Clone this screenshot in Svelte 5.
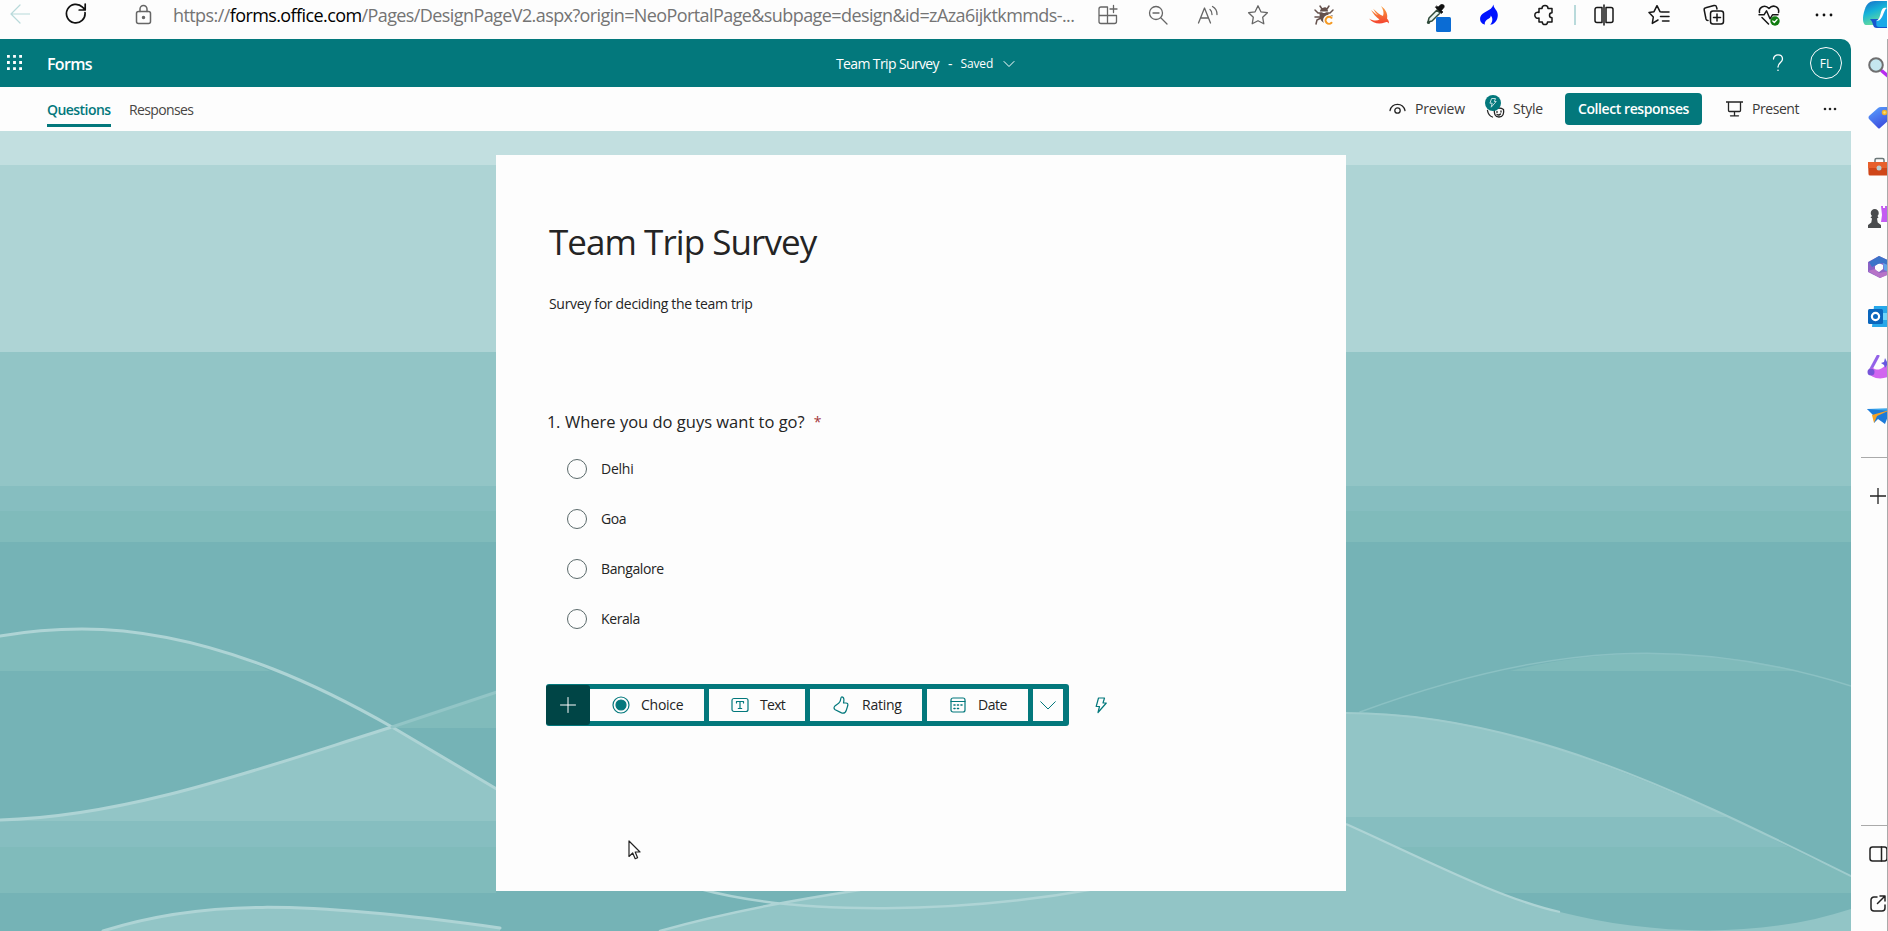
<script>
  const options = ['Delhi', 'Goa', 'Bangalore', 'Kerala'];
</script>

<div class="app">
  <header class="browser">
    <div class="nav">
      <svg class="back" width="20" height="20" viewBox="0 0 20 20"><path d="M19.5 10H1M10 1 1 10l9 9" /></svg>
      <svg class="reload" width="22" height="22" viewBox="0 0 22 22"><path d="M20 9.5a9.3 9.3 0 1 1-2.5-5.3L20 6.600M20.200 1v6h-6" /></svg>
      <svg class="lock" width="18" height="22" viewBox="0 0 18 22"><rect x="1.500" y="7.500" width="14" height="12" rx="2" /><path d="M5 7.500V5a3.500 3.500 0 0 1 7 0v2.500" /><circle cx="8.500" cy="13.500" r="1" fill="#666" /></svg>
    </div>
    <div class="url">https://<b>forms.office.com</b>/Pages/DesignPageV2.aspx?origin=NeoPortalPage&amp;subpage=design&amp;id=zAza6ijktkmmds-...</div>
    <div class="tools grey">
      <svg viewBox="0 0 22 22"><path d="M2 11.500V5a2 2 0 0 1 2-2h6.500v16.500M2 11.500V17.500a2 2 0 0 0 2 2h13.500a2 2 0 0 0 2-2v-6H2M16.500 1.500v7M13 5h7" /></svg>
      <svg viewBox="0 0 22 22"><circle cx="9" cy="9" r="6.500" /><path d="m14 14 6 6M6 9h6" /></svg>
      <svg viewBox="0 0 22 22"><path d="M1.500 19 7.500 4l6 15M3.500 14h8M13 5.500a6 6 0 0 1 2 5M15.500 2.500a9 9 0 0 1 4.500 8" /></svg>
      <svg viewBox="0 0 22 22"><path d="m11 1.800 2.900 6 6.500.9-4.700 4.600 1.100 6.500L11 16.700l-5.800 3.100 1.100-6.500L1.600 8.700l6.500-.9z" /></svg>
    </div>
    <div class="tools ext">
      <svg viewBox="0 0 22 22"><g stroke="#65524d" stroke-width="1.500"><path d="m7 2 2 3 3-1 2 1 2-3M2 6l3 3h4M20 6l-3 3h-4M2 13h5M3 20l1-4 4-2M19 12h-4" /></g><path d="M7 7.500a4 3.500 0 0 1 8 0zM6.500 9h9v4l-3 2-1 4c-3-1-5-4-5-10z" fill="#65524d" stroke="none" /><path d="M18 13.800a3.500 3.500 0 1 0 0 5" stroke="#fdfdfd" stroke-width="4" /><path d="M18.500 13.800a3.500 3.500 0 1 0 0 5" stroke="#f59a23" stroke-width="2" /></svg>
      <svg viewBox="0 0 22 22"><defs><linearGradient id="sw" x2="0" y2="1"><stop stop-color="#f9a03d" /><stop offset="1" stop-color="#f4432f" /></linearGradient></defs><path d="M13 2c5 3.500 7 8.500 6 12.500 2 2 2.200 4 1.700 5-1.200-1.800-2.600-1.700-4-1C11 21 4.500 19 1 14.500c4 2.500 8 2.600 10.500 1C8 13 5 9.500 3 6c2.500 2.200 4.800 4 7 5.300C8 9.200 6.500 7 5.200 4.700 8 7.500 11.500 10.500 15 12c1.300-3.300.2-6.500-2-10z" fill="url(#sw)" stroke="none" /></svg>
      <svg class="dropper" viewBox="0 0 26 30"><path d="m3 18 1-4 8-8 3 3-8 8z" fill="#eaf4ee" stroke="#304b3b" stroke-width="1.500" /><path d="m10.500 3.500 6 6 1.500-1.500-1.500-1.500 2.500-3c1-2-1-4-3-3l-3 2.500-1.200-1z" fill="#111" stroke="#111" stroke-width=".6" /><circle cx="3.500" cy="18.500" r="1.600" fill="#304b3b" stroke="none" /><rect x="11" y="13" width="15" height="15" rx="1.500" fill="#0b6cd4" stroke="none" /></svg>
      <svg viewBox="0 0 22 22"><path d="M15.500.5c0 4 4.200 5.500 4.300 10.500 0 5-3 8.500-5.800 9.500H6.500C3 19.500 1.500 16.500 2.300 13 3.800 7.500 13.500 7.500 15.500.5z" fill="#0012ff" stroke="none" /><path d="M7 21c-1-3 1.500-5.500 4-6.500 1.500-.8 1.800-2 1.700-3 2.300 2.500 2.300 6.500-.7 9.500z" fill="#fdfdfd" stroke="none" /></svg>
      <svg viewBox="0 0 22 22"><path d="M6 4.500h3a3 3 0 0 1 6 0h4v4.300a2.300 2.300 0 0 0 0 5V18h-4.500a2.600 2.600 0 0 1-5.200 0H6v-4a3 3 0 1 1 0-5.500z" /></svg>
    </div>
    <i class="divider"></i>
    <div class="tools">
      <svg viewBox="0 0 22 22"><path d="M9 3.500H4A2 2 0 0 0 2 5.500v11a2 2 0 0 0 2 2h5zM13 3.500h5a2 2 0 0 1 2 2v11a2 2 0 0 1-2 2h-5zM11 1v20" /></svg>
      <svg viewBox="0 0 22 22"><path d="m14 8-2-.3-3-6-3 6-5 .9 4.300 4.500-1 6.300L10 16M14.500 8H21M12.500 12.500H21M14.500 17H21" /></svg>
      <svg viewBox="0 0 22 22"><path d="M5 16.500a2 2 0 0 1-2-1.500L1.200 6a2 2 0 0 1 1.500-2.300L11 1.500A2 2 0 0 1 13.500 3l.5 2" /><rect x="7.500" y="7" width="13" height="13" rx="2.500" /><path d="M14 10v7M10.500 13.500h7" /></svg>
      <svg viewBox="0 0 22 22"><path d="M1.500 8.500C.5 3 7 0 11 4.500 15-.2 21.800 3 20.500 8.500M1 10.800h5l2.500-4 3.500 8 2.500-4H20M4 13.500l6.500 6.500" /><circle cx="17" cy="17" r="4.700" fill="#107c10" stroke="none" /><path d="m14.800 17 1.500 1.500 2.800-3" stroke="#fff" stroke-width="1.200" /></svg>
      <svg viewBox="0 0 22 22"><g fill="#111" stroke="none"><circle cx="4" cy="11" r="1.400" /><circle cx="11" cy="11" r="1.400" /><circle cx="18" cy="11" r="1.400" /></g></svg>
    </div>
    <svg class="copilot" width="24" height="29" viewBox="0 0 24 29"><defs><linearGradient id="c1" x2=".4" y2="1"><stop stop-color="#1769c8" /><stop offset=".5" stop-color="#16b3d8" /><stop offset="1" stop-color="#67dc9c" /></linearGradient></defs><path d="M12 1h12v12l-6 12H3C0 25-1 19 1 12 3 5 5 1 12 1z" fill="url(#c1)" /><path d="M7 19h12l5-10v19H14c-5 0-3-5-7-9z" fill="#1656cd" /><path d="M18 12c1-4 3-5 6-4v19h-8c-4 0-2-4-3-6 3-1 4-5 5-9z" fill="#1aa9e8" /><path d="M24 8c-3-1-5 0-6 4s-2 8-5 9c3 0 4-1 6-4s2-7 5-9z" fill="#fff" /></svg>
  </header>

  <div class="below">
    <main>
      <header class="suite">
        <svg class="waffle" width="15" height="15" viewBox="0 0 16 16"><path d="M0 0h3v3H0zM6.500 0h3v3h-3zM13 0h3v3h-3zM0 6.500h3v3H0zM6.500 6.500h3v3h-3zM13 6.500h3v3h-3zM0 13h3v3H0zM6.500 13h3v3h-3zM13 13h3v3h-3z" /></svg>
        <strong>Forms</strong>
        <div class="doc"><span class="name">Team Trip Survey</span><span class="dash">-</span><span class="saved">Saved</span><svg width="12" height="8" viewBox="0 0 12 8"><path d="m1 1.500 5 5 5-5" /></svg></div>
        <svg class="help" width="12" height="18" viewBox="0 0 12 18"><path d="M1.500 5C1.500-.5 10.500-.5 10.500 5c0 3.500-4.500 3.500-4.500 8" /><circle cx="6" cy="16.300" r=".8" fill="#fff" stroke="none" /></svg>
        <div class="avatar">FL</div>
      </header>

      <nav class="commands">
        <div class="tab active">Questions</div>
        <div class="tab">Responses</div>
        <div class="cmd preview"><svg width="17" height="12" viewBox="0 0 17 12"><path d="M1 7.500C3-.8 14-.8 16 7.500" /><circle cx="8.500" cy="7.500" r="2.700" /></svg><span>Preview</span></div>
        <div class="cmd style"><svg width="20" height="24" viewBox="0 0 20 24"><path d="M2.500 15.500c.5 3 2 5.500 5 6.500" /><path d="M9.500 14.500c2-2 6.500-2 9 0 .8 4-.5 7.500-4.500 7.500s-5.300-3.500-4.500-7.500z" /><path d="M12 16.500v1M16 16v1M12 19.500c1 .7 2.500.5 3.500-.5" /><circle cx="8" cy="8" r="8" fill="#03787c" stroke="none" /><path d="M7 3.500h3.500l-1.200 3h1.900l-5 5.700 1-4H5.300z" stroke="#c2dfe0" stroke-width="1" /></svg><span>Style</span></div>
        <div class="collect">Collect responses</div>
        <div class="cmd present"><svg width="17" height="16" viewBox="0 0 17 16"><path d="M0 1h17M2.500 1v8.500a1 1 0 0 0 1 1h10a1 1 0 0 0 1-1V1M8.500 10.500v4M4.500 14.800h8" /></svg><span>Present</span></div>
        <svg class="more" width="14" height="4" viewBox="0 0 14 4"><circle cx="2" cy="2" r="1.300" /><circle cx="7" cy="2" r="1.300" /><circle cx="12" cy="2" r="1.300" /></svg>
      </nav>

      <div class="canvas">
        <svg class="waves" width="1851" height="800" viewBox="0 131 1851 800">
          <path d="M0 131h1851v34H0z" fill="#c2dfe0" /><path d="M0 165h1851v187H0z" fill="#aed4d5" /><path d="M0 352h1851v134H0z" fill="#92c5c6" /><path d="M0 486h1851v25H0z" fill="#86bec0" /><path d="M0 511h1851v31H0z" fill="#80bbbb" /><path d="M0 542h1851v389H0z" fill="#75b3b6" />
          <path d="M0 635Q40 629 82 629C150 629 215 645 270 671H0z" fill="#80bbbb" />
          <path d="M392 728 500 692H760V728z" fill="#80bbbb" />
          <path d="M0 820C130 817 270 765 392 727L500 792 700 890H0z" fill="#92c5c6" />
          <path d="M0 821h496v26H0z" fill="#86bec0" /><path d="M0 847h496v46H0z" fill="#80bbbb" /><path d="M0 893h800v38H0z" fill="#75b3b6" />
          <path d="M103 931C200 900 300 900 500 928v3z" fill="#92c5c6" />
          <path d="M1510 671C1600 648 1700 648 1800 671z" fill="#80bbbb" />
          <path d="M1200 713H1365C1500 716 1620 770 1730 817H1200z" fill="#92c5c6" />
          <path d="M1200 817H1730L1789 847H1200z" fill="#86bec0" /><path d="M1200 847H1789L1851 877V893H1200z" fill="#80bbbb" />
          <path d="M660 931Q740 908 860 890H1346V824C1420 857 1500 899 1560 912 1650 935 1760 939 1851 909V931z" fill="#92c5c6" />
          <g fill="none" stroke="#aed4d5" stroke-width="3"><path d="M0 636Q40 629 82 629C220 629 350 703 392 727L500 791" /><path d="M0 820C130 817 270 765 392 727" /><path d="M103 931C200 900 300 900 500 928" /></g>
          <path d="M700 889C800 916 960 913 1095 889M660 931Q740 908 860 890" fill="none" stroke="#aed4d5" stroke-width="2.500" />
          <path d="m392 727 108-36" fill="none" stroke="#92c5c6" stroke-width="3" />
          <path d="M1360 712C1550 642 1690 636 1851 686" fill="none" stroke="#8bc1c3" stroke-width="1.500" />
          <path d="M1346 713C1530 713 1700 802 1851 876" fill="none" stroke="#9fcccd" stroke-width="2" />
          <path d="M1346 824C1420 857 1500 899 1560 912" fill="none" stroke="#aed4d5" stroke-width="2.200" stroke-linecap="butt" />
        </svg>
        <section class="card">
          <h1>Team Trip Survey</h1>
          <p class="sub">Survey for deciding the team trip</p>
          <div class="question"><span class="num">1.</span><span>Where you do guys want to go?</span><span class="req">*</span></div>
          <ul>{#each options as option}<li><i></i><span>{option}</span></li>{/each}</ul>
          <div class="adder">
            <div class="bar">
              <div class="plus"><svg width="16" height="16" viewBox="0 0 16 16"><path d="M8 .5v15M.5 8h15" /></svg></div>
              <div class="cell c1"><svg width="18" height="18" viewBox="0 0 18 18"><circle cx="9" cy="9" r="8" /><circle cx="9" cy="9" r="5" fill="#03787c" /></svg><span>Choice</span></div>
              <div class="cell c2"><svg width="18" height="16" viewBox="0 0 18 16"><rect x="1" y="1.500" width="16" height="13" rx="2" /><path d="M5.500 6V4.500h7V6M9 4.500v7M7.300 11.500h3.400" /></svg><span>Text</span></div>
              <div class="cell c3"><svg width="16" height="18" viewBox="0 0 16 18"><path d="M8.800.8C7.500.8 8 3.500 7 5.500 5.800 8 2.500 9 1.500 10.500c-.8 1.200-.4 2.400.7 3.200l6.300 3.200c2.500.8 4-.2 4.800-2.700l1.500-4.700c.3-1.500-.4-2.500-1.700-2.500h-2.600C11 5 11.500.8 8.800.8z" /></svg><span>Rating</span></div>
              <div class="cell c4"><svg width="16" height="16" viewBox="0 0 16 16"><rect x="1" y="1" width="14" height="14" rx="2" /><path d="M1 4.500h14" /><path d="M4 8h1M7.500 8h1M11 8h1M4 11.500h1M7.500 11.500h1" stroke-width="1.600" /></svg><span>Date</span></div>
              <div class="cell c5"><svg width="16" height="9" viewBox="0 0 16 9"><path d="m.7.700 7.300 7.300L15.300.7" /></svg></div>
            </div>
            <svg class="bolt" width="12" height="17" viewBox="0 0 12 17"><path d="M3.500 1h6L8 6h3.300L3 15.500 4.500 9.500H1.200z" /></svg>
          </div>
        </section>
        <svg class="cursor" width="14" height="20" viewBox="0 0 14 20"><path d="M1 1v15.500l3.700-3.500 2.500 5.700 2.400-1L7.200 12H12z" fill="#fff" stroke="#222" stroke-width="1.200" /></svg>
      </div>
    </main>

    <aside>
      <div class="slots">
        <svg viewBox="0 0 24 24"><path d="m16 16 7 6" stroke="#b82cf0" stroke-width="3.500" /><circle cx="10" cy="10" r="6.800" fill="#c5e7ef" stroke="#6f6f70" stroke-width="2" /></svg>
        <svg viewBox="0 0 24 24"><defs><linearGradient id="tg" x2=".5" y2="1"><stop stop-color="#5aa4ff" /><stop offset="1" stop-color="#3d50df" /></linearGradient></defs><path d="m3 11 9-8q1-1 3-1h9v12l-10 9q-1 1-2 0l-9-9q-1-1.500 0-3z" fill="url(#tg)" /><circle cx="18.500" cy="7.500" r="2" fill="#f8e27a" stroke="#f0b32a" stroke-width="1.500" /></svg>
        <svg viewBox="0 0 24 24"><path d="M9 7V5q0-1.500 1.500-1.500h6Q18 3.500 18 5v2" fill="none" stroke="#6b7778" stroke-width="1.500" /><path d="M2 7h22v13.500H4q-1.500 0-1.500-1.500z" fill="#cf4619" /><path d="M2 7h22v6H2z" fill="#e8602c" /><circle cx="13" cy="13" r="2.500" fill="#b9cdd0" /></svg>
        <svg viewBox="0 0 24 24"><path d="M15 1h2v2h2V1h3v2h2v14h-9l1-7z" fill="#c45cf2" /><path d="M6 11a4 4 0 1 1 5.500 0l1 1.500-1.500 1 .7 4 3.300 2.500v3H2v-3l3.300-2.500.7-4-1.500-1z" fill="#4a4c4e" /></svg>
        <svg viewBox="0 0 24 24"><path fill-rule="evenodd" d="M13 1 24 6v12l-10 5L2 17V7zm0 7-4 3v4l4 2 4-3v-4z" fill="#8b62c5" /><path d="M13 1 24 6v5l-7-3-5 1-6 3-3-5z" fill="#3c74c9" /><path d="m2 16 7-2 4 4 11-2v3l-10 4z" fill="#b673c8" /><path d="m17 8 7 3v6l-6-2z" fill="#61a5e9" /></svg>
        <svg viewBox="0 0 24 24"><path d="M8 1h16v21H6z" fill="#27a8ea" /><path d="M15 8h9v7h-9z" fill="#70d5fa" /><rect x="2" y="4" width="15" height="15" rx="1.500" fill="#0a66bd" /><circle cx="9.500" cy="11.500" r="3.600" fill="none" stroke="#fff" stroke-width="2.200" /></svg>
        <svg viewBox="0 0 24 24"><path d="M12 1 5 14" stroke="#9362e8" stroke-width="3" /><path d="M7 13c8 5 11-4 17-4v12c-9 5-21 2-21-5 0-3 3-4 4-3z" fill="#d166ef" /><circle cx="5" cy="17" r="3.500" fill="#7654d8" /><path d="m19 3 2 4 3 1-3 2-2 3-1-3-3-2 3-1z" fill="#6657e0" /></svg>
        <svg viewBox="0 0 24 24"><path d="m1 4 23-1-10 9z" fill="#3ea9ec" /><path d="m1 4 7 7v7l4-4 7 5 5-13z" fill="#1c7ad9" /><path d="M24 5 6 10l2 8 3-7z" fill="#f7a325" /></svg>
      </div>
      <i class="rule"></i>
      <svg class="add" width="16" height="16" viewBox="0 0 16 16"><path d="M8 0v16M0 8h16" /></svg>
      <i class="rule second"></i>
      <svg class="panel" width="20" height="16" viewBox="0 0 20 16"><rect x="1" y="1" width="17" height="14" rx="2.500" /><path d="M12.500 1v14" /></svg>
      <svg class="open" width="17" height="17" viewBox="0 0 17 17"><path d="M7 2H4a3 3 0 0 0-3 3v8a3 3 0 0 0 3 3h8a3 3 0 0 0 3-3v-3M10 1h5v5M15 1 7.500 8.500" /></svg>
    </aside>
  </div>
</div>

<style>
  :global(body) { margin: 0; background: #fdfdfd; overflow: hidden; }
  .app { width: 1888px; height: 931px; overflow: hidden; font: 14px/20px "Open Sans", sans-serif; color: #242424; background: #fdfdfd; white-space: nowrap; }
  .app :global(svg) { display: block; flex: none; fill: none; stroke-linecap: round; stroke-linejoin: round; }
  .browser { height: 39px; display: flex; align-items: flex-start; }
  .nav { width: 173px; display: flex; flex: none; }
  .back { margin: 4px 0 0 10px; stroke: #b8d9da; stroke-width: 1.200; }
  .reload { margin: 3px 0 0 35px; stroke: #111; stroke-width: 1.700; }
  .lock { margin: 4px 0 0 48px; stroke: #666; stroke-width: 1.500; }
  .url { width: 911px; height: 30px; font-size: 18px; line-height: 30px; letter-spacing: -0.590px; color: #747474; flex: none; }
  .url b { font-weight: 400; color: #000; }
  .tools { display: flex; margin-left: 13.500px; }
  .tools svg { width: 22px; height: 22px; margin: 4px 16.500px 0; stroke: #171717; stroke-width: 1.500; }
  .tools.grey { margin-left: -1px; }
  .grey svg { margin: 4px 14px 0; stroke: #666; stroke-width: 1.300; }
  .tools .dropper { width: 26px; height: 30px; margin: 4px 11px 0 18px; }
  .divider { width: 2px; height: 20px; margin: 5px 0 0 2px; background: #b9dadb; }
  .divider + .tools { margin-left: 1px; }
  .copilot { margin-left: 11px; }
  .below { display: flex; height: 892px; }
  main { width: 1851px; flex: none; }
  .suite { height: 48px; background: #03787c; color: #fff; border-radius: 0 10px 0 0; display: flex; align-items: center; }
  .waffle { margin: 0 0 2px 7px; fill: #fff !important; }
  .suite strong { font-size: 16px; font-weight: 600; letter-spacing: -0.650px; width: 789px; margin: 1px 0 0 25px; }
  .doc { display: flex; align-items: center; width: 936px; padding-top: 1px; }
  .doc svg { stroke: #fff; margin: 1px 0 0 10px; }
  .name { letter-spacing: -0.624px; }
  .dash { margin: 0 8px 0 9px; }
  .saved { font-size: 12px; letter-spacing: -0.150px; }
  .help { stroke: #fff; stroke-width: 1.300; }
  .avatar { width: 30px; height: 30px; margin-left: 26px; border: 1px solid #fff; border-radius: 50%; text-align: center; line-height: 32px; font-size: 12px; }
  .commands { height: 44px; display: flex; align-items: center; padding-left: 47px; }
  .tab { height: 44px; line-height: 45px; width: 64px; margin-right: 18px; box-sizing: border-box; color: #484644; letter-spacing: -0.640px; }
  .active { color: #03787c; font-weight: 600; letter-spacing: -0.550px; background: linear-gradient(#03787c, #03787c) 0 37px / 64px 3px no-repeat; }
  .cmd { display: flex; align-items: center; font-weight: 500; color: #3b3a39; }
  .cmd svg { stroke: #242424; stroke-width: 1.300; }
  .preview { width: 96px; margin-left: 1178px; gap: 9px; letter-spacing: -0.190px; }
  .style { width: 80px; gap: 8px; letter-spacing: -0.216px; }
  .style svg { margin-top: -5px; }
  .collect { width: 137px; height: 32px; line-height: 32px; border-radius: 4px; background: #03787c; color: #fff; font-weight: 600; text-align: center; letter-spacing: -0.424px; }
  .present { width: 97px; margin-left: 24px; gap: 9px; letter-spacing: -0.446px; }
  .more { fill: #242424 !important; }
  .canvas { position: relative; height: 800px; padding: 24px 0 0 496px; box-sizing: border-box; }
  .waves { position: absolute; left: 0; top: 0; }
  .card { position: relative; width: 850px; height: 736px; box-sizing: border-box; padding: 60px 0 0 50px; background: #fdfdfd; }
  h1 { margin: 0 0 0 3px; font-size: 35px; line-height: 54px; font-weight: 400; letter-spacing: -0.950px; }
  .sub { margin: 25px 0 0 3px; letter-spacing: -0.310px; }
  .question { display: flex; margin: 96px 0 0 1px; font-size: 16.500px; line-height: 24px; }
  .num { width: 18px; letter-spacing: -0.500px; }
  .req { color: #a4373a; margin-left: 9px; font-size: 14px; }
  ul { list-style: none; padding: 0; margin: 10px 0 0 21px; }
  li { display: flex; align-items: center; height: 50px; gap: 14px; letter-spacing: -0.400px; }
  li:first-child { letter-spacing: -0.250px; }
  li i { width: 18px; height: 18px; border: 1px solid #5b6a6b; border-radius: 50%; }
  .adder { display: flex; align-items: center; margin-top: 40px; }
  .bar { display: flex; align-items: center; width: 523px; height: 42px; box-sizing: border-box; gap: 5px; background: #03787c; border-radius: 3px; }
  .plus { width: 44px; height: 40px; display: grid; place-items: center; background: #004546; border-radius: 3px; margin-right: -5px; }
  .plus svg { stroke: #fff; }
  .cell { height: 32px; display: flex; align-items: center; background: #fdfdfd; box-sizing: border-box; padding-left: 22px; }
  .cell svg, .bolt { stroke: #03787c; stroke-width: 1.200; }
  .c1 { width: 114px; gap: 11px; letter-spacing: -0.250px; }
  .c2 { width: 96px; gap: 11px; letter-spacing: -0.723px; }
  .c3 { width: 112px; padding-left: 23px; gap: 13px; letter-spacing: -0.250px; }
  .c4 { width: 101px; padding-left: 23px; gap: 12px; letter-spacing: -0.449px; }
  .c5 { width: 30px; padding-left: 7px; }
  .c5 svg { stroke-width: 1; }
  .bolt { margin-left: 26px; }
  .cursor { position: absolute; left: 628px; top: 709px; }
  aside { width: 37px; box-sizing: border-box; border-right: 1px solid #aaa; overflow: hidden; padding-left: 14px; }
  .slots { padding-top: 3px; display: grid; grid-auto-rows: 50px; align-items: center; }
  .slots svg { width: 24px; height: 24px; margin-left: 1px; }
  .rule { display: block; height: 1px; background: #aaa; margin: 15px 0 0 -4px; }
  .second { margin-top: 321px; }
  .add { margin: 30px 0 0 5px; stroke: #222; stroke-width: 1.300; }
  .panel { margin: 20px 0 0 4px; stroke: #222; stroke-width: 1.500; }
  .open { margin: 33px 0 0 5px; stroke: #222; stroke-width: 1.500; }
</style>
